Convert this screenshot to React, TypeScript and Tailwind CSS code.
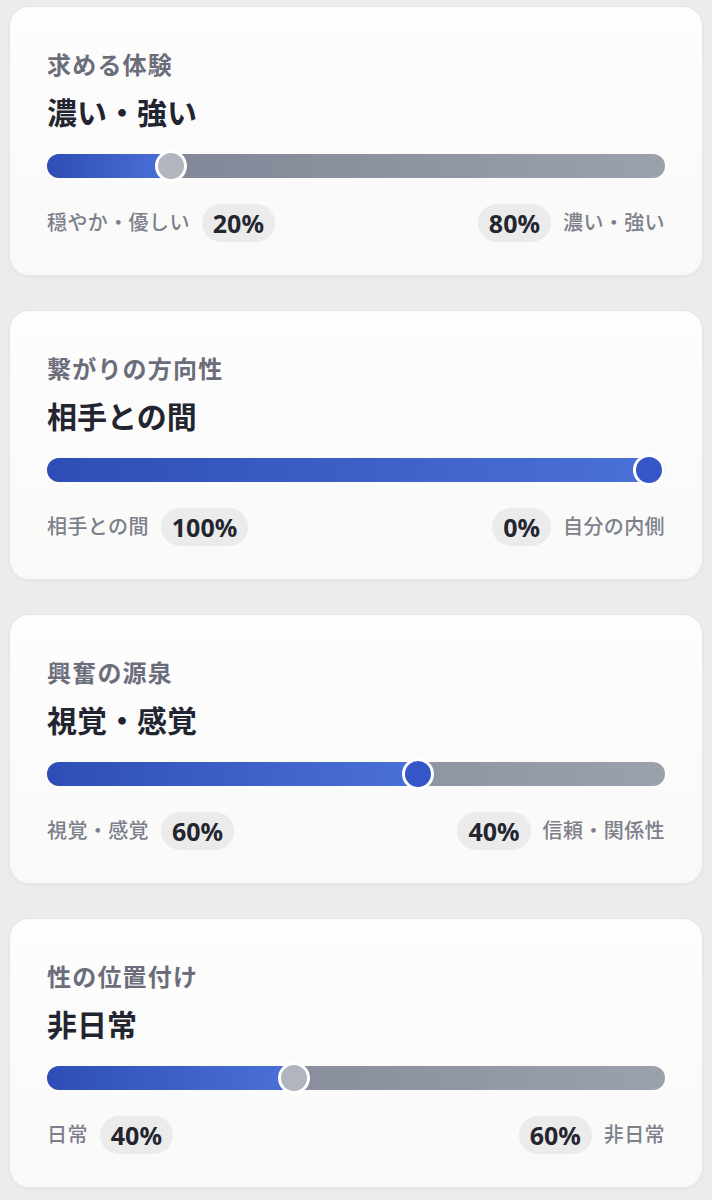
const FONT = '"Noto Sans", "Noto Sans CJK JP", sans-serif';

type Axis = {
  label: string;
  left: string;
  right: string;
  value: number;
};

const axes: Axis[] = [
  { label: "求める体験", left: "穏やか・優しい", right: "濃い・強い", value: 20 },
  { label: "繋がりの方向性", left: "相手との間", right: "自分の内側", value: 100 },
  { label: "興奮の源泉", left: "視覚・感覚", right: "信頼・関係性", value: 60 },
  { label: "性の位置付け", left: "日常", right: "非日常", value: 40 },
];

function Pill({ children }: { children: React.ReactNode }) {
  return (
    <span className="flex h-[38px] items-center rounded-full bg-[#ebebeb] px-[11px] text-[25px] font-bold leading-none text-[#23252f]">
      {children}
    </span>
  );
}

function Slider({ value }: { value: number }) {
  const strong = value >= 50;
  const BAR = 618;
  const center = Math.min(Math.max((value / 100) * BAR, 16), BAR - 16);
  return (
    <div className="relative flex h-[32px] items-center">
      <div className="flex h-6 w-full overflow-hidden rounded-full bg-gradient-to-r from-[#7b8191] to-[#9ba1ac]">
        <div
          className="h-full rounded-l-full bg-gradient-to-r from-[#2f4db6] to-[#4a71d8]"
          style={{ width: `${center}px` }}
        />
      </div>
      <div
        className={`absolute top-0 size-[32px] rounded-full border-[3px] border-white ${
          strong ? "bg-[#3556c6]" : "bg-[#b1b5bd]"
        }`}
        style={{ left: `${center - 16}px` }}
      />
    </div>
  );
}

function AxisCard({ axis }: { axis: Axis }) {
  const winner = axis.value >= 50 ? axis.left : axis.right;
  return (
    <div className="rounded-[20px] border border-[#e6e6e6] bg-gradient-to-b from-[#fdfdfd] to-[#f9f9f8] px-[37px] pb-[33px] pt-[38px] shadow-[0_1px_3px_rgba(0,0,0,0.05)]">
      <div className="h-[40px] text-[24px] font-semibold leading-[40px] tracking-[0.05em] text-[#6b6e7a]">
        {axis.label}
      </div>
      <div className="mt-2 h-[40px] text-[30px] font-bold leading-[40px] text-[#22252f]">
        {winner}
      </div>
      <div className="mt-[17px]">
        <Slider value={axis.value} />
      </div>
      <div className="mt-[22px] flex items-center justify-between">
        <div className="flex items-center gap-3">
          <span className="text-[20px] font-medium tracking-[0.02em] text-[#7d808b]">{axis.left}</span>
          <Pill>{axis.value}%</Pill>
        </div>
        <div className="flex items-center gap-3">
          <Pill>{100 - axis.value}%</Pill>
          <span className="text-[20px] font-medium tracking-[0.02em] text-[#7d808b]">{axis.right}</span>
        </div>
      </div>
    </div>
  );
}

export default function App() {
  return (
    <div className="min-h-[1200px] bg-[#ececec] px-[9px] pt-[6px] pb-[11px]" style={{ fontFamily: FONT }}>
      <div className="flex flex-col gap-[34px]">
        {axes.map((a) => (
          <AxisCard key={a.label} axis={a} />
        ))}
      </div>
    </div>
  );
}
